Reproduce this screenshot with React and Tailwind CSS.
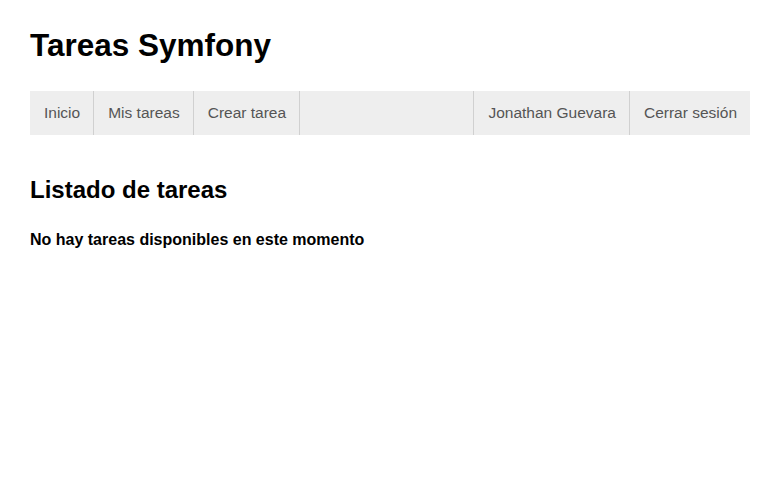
const App = () => {
  const left = ['Inicio', 'Mis tareas', 'Crear tarea'];
  const right = ['Jonathan Guevara', 'Cerrar sesión'];

  return (
    <div className="min-h-[500px] bg-white px-[30px] text-black" style={{ fontFamily: '"Liberation Sans", Arial, sans-serif' }}>
      <h1 className="pt-[27px] text-[31.5px] font-bold leading-[36px]">Tareas Symfony</h1>
      <nav className="mt-[28px] flex h-[44px] w-[720px] bg-[#eeeeee] text-[15.5px] text-[#555]">
        {left.map((item) => (
          <a key={item} href="#" className="flex items-center border-r border-[#d0d0d0] pl-[14px] pr-[13px]">
            {item}
          </a>
        ))}
        <div className="flex-1" />
        {right.map((item) => (
          <a key={item} href="#" className="flex items-center border-l border-[#d0d0d0] pl-[14px] pr-[13px]">
            {item}
          </a>
        ))}
      </nav>
      <h2 className="mt-[41px] text-[24px] font-bold leading-[28px]">Listado de tareas</h2>
      <p className="mt-[26px] text-[16px] font-bold leading-[20px]">No hay tareas disponibles en este momento</p>
    </div>
  );
};

export default App;
